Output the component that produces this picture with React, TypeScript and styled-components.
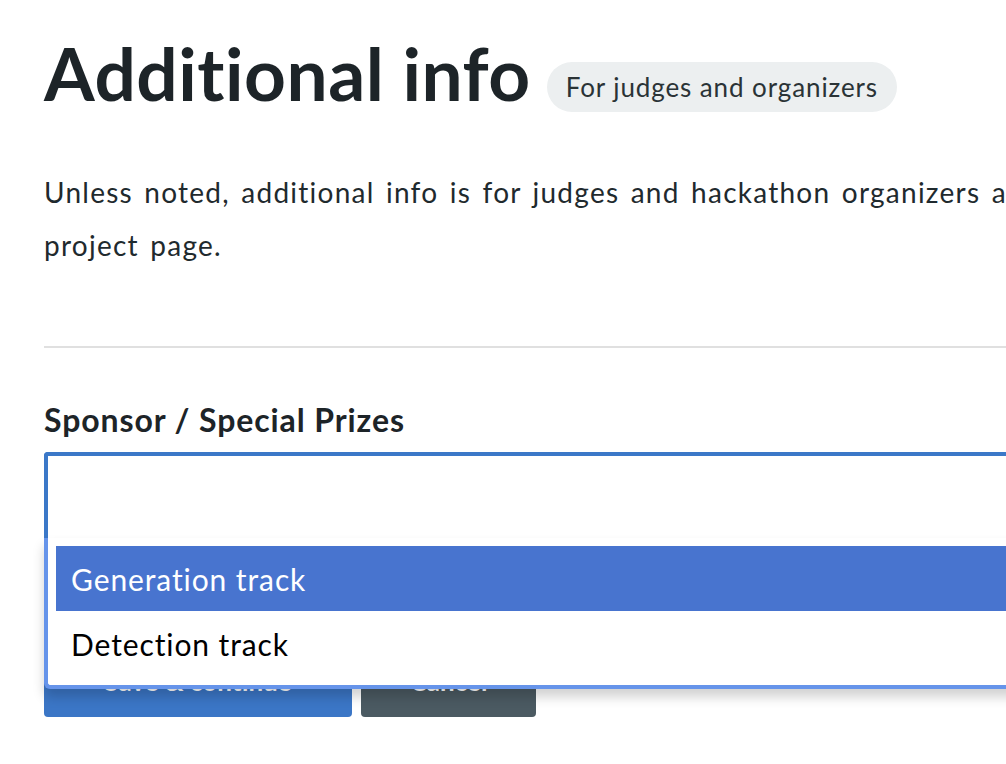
import React from "react";
import styled, { createGlobalStyle } from "styled-components";

const Global = createGlobalStyle`
  html, body { margin: 0; padding: 0; background: #ffffff; overflow: hidden; }
  body { font-family: Lato, "Noto Sans", "Liberation Sans", sans-serif; color: #1e2629; }
  * { box-sizing: border-box; }
`;

const Page = styled.div`
  width: 1300px;
  padding: 37px 0 0 44px;
`;

const HeaderRow = styled.div`
  display: flex;
  align-items: flex-start;
  gap: 16px;
`;

const Title = styled.h1`
  margin: 0;
  font-size: 73px;
  line-height: 72px;
  font-weight: 700;
  color: #1d2428;
  letter-spacing: 0.5px;
`;

const Badge = styled.span`
  display: inline-flex;
  align-items: center;
  height: 50px;
  padding: 0 19px;
  margin-top: 25px;
  border-radius: 25px;
  background: #eceff0;
  color: #2a3336;
  font-size: 26px;
  letter-spacing: 0.9px;
`;

const Intro = styled.p`
  margin: 54px 0 0;
  font-size: 28px;
  line-height: 53px;
  color: #1f2a2e;
  letter-spacing: 1.25px;
  word-spacing: 3px;
  white-space: nowrap;
`;

const Rule = styled.hr`
  margin: 74px 0 0;
  border: 0;
  height: 2px;
  background: #e0e0e0;
`;

const Label = styled.label`
  display: block;
  margin-top: 53px;
  font-size: 32px;
  line-height: 38px;
  font-weight: 700;
  color: #1d2428;
  letter-spacing: 0.9px;
`;

const Field = styled.div`
  position: relative;
  margin-top: 13px;
`;

const SelectBox = styled.div`
  height: 86px;
  border: 4px solid #3b78c8;
  border-bottom: 0;
  border-radius: 4px 0 0 0;
  background: #ffffff;
`;

const Dropdown = styled.ul`
  position: absolute;
  left: 0;
  right: 0;
  top: 86px;
  margin: 0;
  padding: 8px 0 9px 8px;
  list-style: none;
  background: #ffffff;
  border: 4px solid #6694ea;
  border-top: 0;
  border-right: 0;
  border-radius: 0 0 0 6px;
  box-shadow: 0 8px 12px rgba(0, 0, 0, 0.18);
  z-index: 2;
`;

const Option = styled.li<{ $active?: boolean }>`
  height: 65px;
  display: flex;
  align-items: center;
  padding-left: 15px;
  font-size: 30px;
  letter-spacing: 0.9px;
  background: ${(p) => (p.$active ? "#4874cf" : "transparent")};
  color: ${(p) => (p.$active ? "#ffffff" : "#000000")};
`;

const Actions = styled.div`
  display: flex;
  gap: 9px;
  margin-top: 112px;
`;

const Button = styled.button<{ $variant: "primary" | "secondary" }>`
  height: 67px;
  padding: 0 0 5px;
  border: 0;
  border-radius: 4px;
  font-family: inherit;
  font-size: 26px;
  font-weight: 700;
  color: #ffffff;
  background: ${(p) => (p.$variant === "primary" ? "#3b76c6" : "#4b5a62")};
  width: ${(p) => (p.$variant === "primary" ? "308px" : "175px")};
`;

export default function App() {
  return (
    <>
      <Global />
      <Page>
        <HeaderRow>
          <Title>Additional info</Title>
          <Badge>For judges and organizers</Badge>
        </HeaderRow>
        <Intro>
          Unless noted, additional info is for judges and hackathon organizers and won't appear on your public
          <br />
          project page.
        </Intro>
        <Rule />
        <Label>Sponsor / Special Prizes</Label>
        <Field>
          <SelectBox />
          <Dropdown>
            <Option $active>Generation track</Option>
            <Option>Detection track</Option>
          </Dropdown>
          <Actions>
            <Button $variant="primary">Save &amp; continue</Button>
            <Button $variant="secondary">Cancel</Button>
          </Actions>
        </Field>
      </Page>
    </>
  );
}
